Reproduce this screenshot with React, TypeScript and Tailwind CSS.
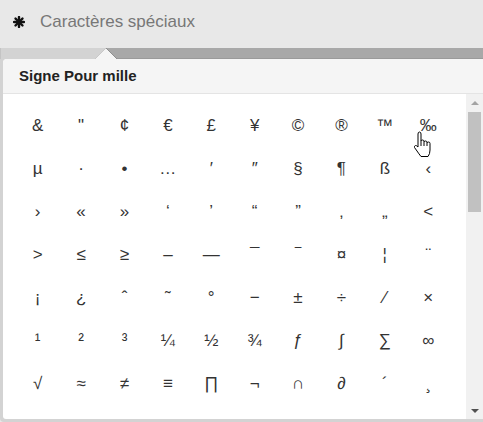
import React from "react";

const ROWS: string[][] = [
  ["&", "\"", "¢", "€", "£", "¥", "©", "®", "™", "‰"],
  ["µ", "·", "•", "…", "′", "″", "§", "¶", "ß", "‹"],
  ["›", "«", "»", "‘", "’", "“", "”", "‚", "„", "<"],
  [">", "≤", "≥", "–", "—", "¯", "‾", "¤", "¦", "¨"],
  ["¡", "¿", "ˆ", "˜", "°", "−", "±", "÷", "⁄", "×"],
  ["¹", "²", "³", "¼", "½", "¾", "ƒ", "∫", "∑", "∞"],
  ["√", "≈", "≠", "≡", "∏", "¬", "∩", "∂", "´", "¸"],
];

function AsteriskIcon() {
  return (
    <svg width="12" height="12" viewBox="0 0 12 12" className="shrink-0">
      <g stroke="#111" strokeWidth="2.4" strokeLinecap="round">
        <line x1="6" y1="1" x2="6" y2="11" />
        <line x1="1" y1="6" x2="11" y2="6" />
        <line x1="2.5" y1="2.5" x2="9.5" y2="9.5" />
        <line x1="9.5" y1="2.5" x2="2.5" y2="9.5" />
      </g>
    </svg>
  );
}

function HandCursor() {
  return (
    <svg width="20" height="27" viewBox="0 0 20 27" className="absolute left-[413px] top-[131px]">
      <path
        d="M5 3Q5 1 6.5 1Q8 1 8 3V10Q8 9 9.5 9Q11 9 11 10.5V11Q11 10 12.5 10Q14 10 14 11.5V12Q14 11 15.5 11Q17 11 17 12.5V19Q17 23 15 25.5H8Q6 23 4 20L1.5 16.5Q1 15 2.5 14.5Q3.5 14.3 5 16Z"
        fill="#fff"
        stroke="#000"
        strokeWidth="1"
        strokeLinejoin="round"
      />
      <path d="M8 10V15M11 11V15M14 12V15" stroke="#000" strokeWidth="1" />
    </svg>
  );
}

export default function App() {
  return (
    <div
      className="relative w-[483px] h-[422px] overflow-hidden bg-[#e8e8e8] flex flex-col"
      style={{ fontFamily: '"Liberation Sans", Arial, sans-serif' }}
    >
      {/* Toolbar title */}
      <div className="h-[48px] shrink-0 flex items-center gap-[15px] pl-[13px] pb-[4px]">
        <AsteriskIcon />
        <span className="text-[17px] text-[#777]">Caractères spéciaux</span>
      </div>

      {/* Popover frame */}
      <div className="flex-1 min-h-0 flex flex-col bg-[#d3d3d3] rounded-bl-[4px]">
        <div className="h-[11px] shrink-0 flex">
          <div className="w-[95px] border-l border-[#c4c4c4]" />
          <svg width="22" height="12" viewBox="0 0 22 12" className="-mt-[1px] shrink-0">
            <rect x="0" y="0" width="11" height="12" fill="#d3d3d3" />
            <rect x="11" y="0" width="11" height="12" fill="#a8a8a8" />
            <rect x="0" y="0" width="22" height="1" fill="#e8e8e8" />
            <polygon points="0,12 11,1 22,12" fill="#f5f5f5" />
            <line x1="0" y1="12" x2="11" y2="1" stroke="#c8c8c8" strokeWidth="1" />
            <line x1="11" y1="1" x2="22" y2="12" stroke="#8f8f8f" strokeWidth="1" />
          </svg>
          <div className="flex-1 bg-[#a8a8a8] border-b border-[#9a9a9a]" />
        </div>

        <div className="flex-1 min-h-0 flex flex-col ml-[3px] mb-[3px] bg-white rounded-tl-[4px] rounded-bl-[3px] overflow-hidden">
          <div className="h-[35px] shrink-0 flex items-center px-[16px] bg-[#f5f5f5] border-b border-[#e4e4e4]">
            <span className="text-[15px] font-bold text-[#222]">Signe Pour mille</span>
          </div>

          <div className="flex-1 min-h-0 flex">
            <div className="flex-1 overflow-hidden pl-[13px] pt-[10px]">
              <div className="grid grid-cols-[repeat(10,43.4px)] auto-rows-[43px] text-[17px] text-[#333]">
                {ROWS.flat().map((c, i) => (
                  <div key={i} className="flex items-center justify-center">
                    {c}
                  </div>
                ))}
              </div>
            </div>

            {/* Scrollbar */}
            <div className="w-[17px] shrink-0 bg-[#f1f1f1] flex flex-col">
              <div className="h-[17px] flex items-center justify-center">
                <div className="w-0 h-0 border-l-[4px] border-r-[4px] border-b-[4px] border-l-transparent border-r-transparent border-b-[#a3a3a3]" />
              </div>
              <div className="h-[100px] mx-[2px] mt-[1px] bg-[#c1c1c1]" />
              <div className="flex-1" />
              <div className="h-[17px] flex items-center justify-center">
                <div className="w-0 h-0 border-l-[4px] border-r-[4px] border-t-[4px] border-l-transparent border-r-transparent border-t-[#505050]" />
              </div>
            </div>
          </div>
        </div>
      </div>

      <HandCursor />
    </div>
  );
}
